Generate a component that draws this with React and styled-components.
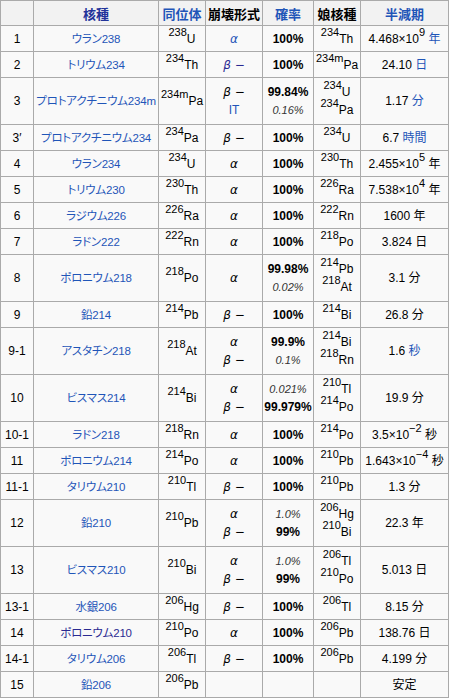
import styled, { createGlobalStyle } from 'styled-components';

const GlobalStyle = createGlobalStyle`
  body {
    margin: 0;
    background: #ffffff;
  }
`;

const Table = styled.table`
  border-collapse: collapse;
  width: 448px;
  table-layout: fixed;
  background: #f9f9f9;
  border: 1px solid #aaaaaa;
  font-family: 'Liberation Sans', 'Noto Sans CJK JP', sans-serif;
  font-feature-settings: 'palt';
  font-size: 12px;
  color: #000000;
`;

const HeadRow = styled.tr`
  height: 25px;
`;

const HeadCell = styled.th`
  padding: 0 1px;
  background: #f2f2f2;
  border: 1px solid #aaaaaa;
  font-size: 13px;
  font-weight: 700;
  text-align: center;
  color: ${(props) => props.$color || '#000000'};
`;

const Row = styled.tr`
  height: ${(props) => (props.$tall ? 47 : 26)}px;
`;

const Cell = styled.td`
  padding: 0 1px;
  border: 1px solid #aaaaaa;
  text-align: center;
  vertical-align: middle;
  line-height: 18px;
  white-space: nowrap;
  overflow: hidden;
`;

const Link = styled.span`
  color: ${(props) => (props.$visited ? '#2a2a92' : '#1f55b8')};
`;

const Name = styled(Link)`
  font-size: 11.5px;
  letter-spacing: -0.2px;
`;

const Sup = styled.sup`
  font-size: 11px;
  line-height: 0;
  vertical-align: 7px;
`;

const Greek = styled.span`
  font-style: italic;
  font-family: 'DejaVu Sans', sans-serif;
  font-size: 12px;
`;

const Percent = styled.span`
  font-weight: ${(props) => (props.$minor ? 400 : 700)};
  font-style: ${(props) => (props.$minor ? 'italic' : 'normal')};
  font-size: ${(props) => (props.$minor ? 11 : 12)}px;
  color: ${(props) => (props.$minor ? '#333333' : '#000000')};
`;

const Line = styled.div`
  line-height: 18px;
`;

const widths = [33, 125, 47, 57, 51, 47, 88];

const Iso = ({ m, s }) => (
  <>
    <Sup>{m}</Sup>
    {s}
  </>
);

const Mode = ({ t, link, visited }) => {
  const g =
    t === 'a' ? <Greek>α</Greek> : t === 'b' ? <Greek>β −</Greek> : t;
  return link ? <Link $visited={visited}>{g}</Link> : g;
};

const Half = ({ v, e, u, link }) => (
  <>
    {v}
    {e !== undefined && (
      <>
        ×10<Sup>{e}</Sup>
      </>
    )}{' '}
    {link ? <Link>{u}</Link> : u}
  </>
);

const rows = [
  { no: '1', name: 'ウラン238', iso: ['238', 'U'], modes: [{ t: 'a', link: true }], probs: [['100%']], dau: [['234', 'Th']], half: { v: '4.468', e: '9', u: '年', link: true } },
  { no: '2', name: 'トリウム234', iso: ['234', 'Th'], modes: [{ t: 'b', link: true, visited: true }], probs: [['100%']], dau: [['234m', 'Pa']], half: { v: '24.10', u: '日', link: true } },
  { no: '3', name: 'プロトアクチニウム234m', iso: ['234m', 'Pa'], modes: [{ t: 'b' }, { t: 'IT', link: true }], probs: [['99.84%'], ['0.16%', true]], dau: [['234', 'U'], ['234', 'Pa']], half: { v: '1.17', u: '分', link: true } },
  { no: '3′', name: 'プロトアクチニウム234', iso: ['234', 'Pa'], modes: [{ t: 'b' }], probs: [['100%']], dau: [['234', 'U']], half: { v: '6.7', u: '時間', link: true } },
  { no: '4', name: 'ウラン234', iso: ['234', 'U'], modes: [{ t: 'a' }], probs: [['100%']], dau: [['230', 'Th']], half: { v: '2.455', e: '5', u: '年' } },
  { no: '5', name: 'トリウム230', iso: ['230', 'Th'], modes: [{ t: 'a' }], probs: [['100%']], dau: [['226', 'Ra']], half: { v: '7.538', e: '4', u: '年' } },
  { no: '6', name: 'ラジウム226', iso: ['226', 'Ra'], modes: [{ t: 'a' }], probs: [['100%']], dau: [['222', 'Rn']], half: { v: '1600', u: '年' } },
  { no: '7', name: 'ラドン222', iso: ['222', 'Rn'], modes: [{ t: 'a' }], probs: [['100%']], dau: [['218', 'Po']], half: { v: '3.824', u: '日' } },
  { no: '8', name: 'ポロニウム218', iso: ['218', 'Po'], modes: [{ t: 'a' }], probs: [['99.98%'], ['0.02%', true]], dau: [['214', 'Pb'], ['218', 'At']], half: { v: '3.1', u: '分' } },
  { no: '9', name: '鉛214', iso: ['214', 'Pb'], modes: [{ t: 'b' }], probs: [['100%']], dau: [['214', 'Bi']], half: { v: '26.8', u: '分' } },
  { no: '9-1', name: 'アスタチン218', iso: ['218', 'At'], modes: [{ t: 'a' }, { t: 'b' }], probs: [['99.9%'], ['0.1%', true]], dau: [['214', 'Bi'], ['218', 'Rn']], half: { v: '1.6', u: '秒', link: true } },
  { no: '10', name: 'ビスマス214', iso: ['214', 'Bi'], modes: [{ t: 'a' }, { t: 'b' }], probs: [['0.021%', true], ['99.979%']], dau: [['210', 'Tl'], ['214', 'Po']], half: { v: '19.9', u: '分' } },
  { no: '10-1', name: 'ラドン218', iso: ['218', 'Rn'], modes: [{ t: 'a' }], probs: [['100%']], dau: [['214', 'Po']], half: { v: '3.5', e: '−2', u: '秒' } },
  { no: '11', name: 'ポロニウム214', iso: ['214', 'Po'], modes: [{ t: 'a' }], probs: [['100%']], dau: [['210', 'Pb']], half: { v: '1.643', e: '−4', u: '秒' } },
  { no: '11-1', name: 'タリウム210', iso: ['210', 'Tl'], modes: [{ t: 'b' }], probs: [['100%']], dau: [['210', 'Pb']], half: { v: '1.3', u: '分' } },
  { no: '12', name: '鉛210', iso: ['210', 'Pb'], modes: [{ t: 'a' }, { t: 'b' }], probs: [['1.0%', true], ['99%']], dau: [['206', 'Hg'], ['210', 'Bi']], half: { v: '22.3', u: '年' } },
  { no: '13', name: 'ビスマス210', iso: ['210', 'Bi'], modes: [{ t: 'a' }, { t: 'b' }], probs: [['1.0%', true], ['99%']], dau: [['206', 'Tl'], ['210', 'Po']], half: { v: '5.013', u: '日' } },
  { no: '13-1', name: '水銀206', iso: ['206', 'Hg'], modes: [{ t: 'b' }], probs: [['100%']], dau: [['206', 'Tl']], half: { v: '8.15', u: '分' } },
  { no: '14', name: 'ポロニウム210', visited: true, iso: ['210', 'Po'], modes: [{ t: 'a' }], probs: [['100%']], dau: [['206', 'Pb']], half: { v: '138.76', u: '日' } },
  { no: '14-1', name: 'タリウム206', iso: ['206', 'Tl'], modes: [{ t: 'b' }], probs: [['100%']], dau: [['206', 'Pb']], half: { v: '4.199', u: '分' } },
  { no: '15', name: '鉛206', iso: ['206', 'Pb'], modes: [], probs: [], dau: [], half: { v: '安定', u: '' } },
];

const App = () => (
  <>
    <GlobalStyle />
    <Table>
      <colgroup>
        {widths.map((w, i) => (
          <col key={i} style={{ width: w }} />
        ))}
      </colgroup>
      <thead>
        <HeadRow>
          <HeadCell />
          <HeadCell $color="#22339a">核種</HeadCell>
          <HeadCell $color="#1f55b8">同位体</HeadCell>
          <HeadCell>崩壊形式</HeadCell>
          <HeadCell $color="#1f55b8">確率</HeadCell>
          <HeadCell>娘核種</HeadCell>
          <HeadCell $color="#1f55b8">半減期</HeadCell>
        </HeadRow>
      </thead>
      <tbody>
        {rows.map((r) => (
          <Row key={r.no} $tall={r.dau.length > 1 || r.modes.length > 1}>
            <Cell>{r.no}</Cell>
            <Cell>
              <Name $visited={r.visited}>{r.name}</Name>
            </Cell>
            <Cell>
              <Iso m={r.iso[0]} s={r.iso[1]} />
            </Cell>
            <Cell>
              {r.modes.map((m, i) => (
                <Line key={i}>
                  <Mode {...m} />
                </Line>
              ))}
            </Cell>
            <Cell>
              {r.probs.map(([p, minor], i) => (
                <Line key={i}>
                  <Percent $minor={minor}>{p}</Percent>
                </Line>
              ))}
            </Cell>
            <Cell>
              {r.dau.map(([m, s], i) => (
                <Line key={i}>
                  <Iso m={m} s={s} />
                </Line>
              ))}
            </Cell>
            <Cell>
              <Half {...r.half} />
            </Cell>
          </Row>
        ))}
      </tbody>
    </Table>
  </>
);

export default App;
